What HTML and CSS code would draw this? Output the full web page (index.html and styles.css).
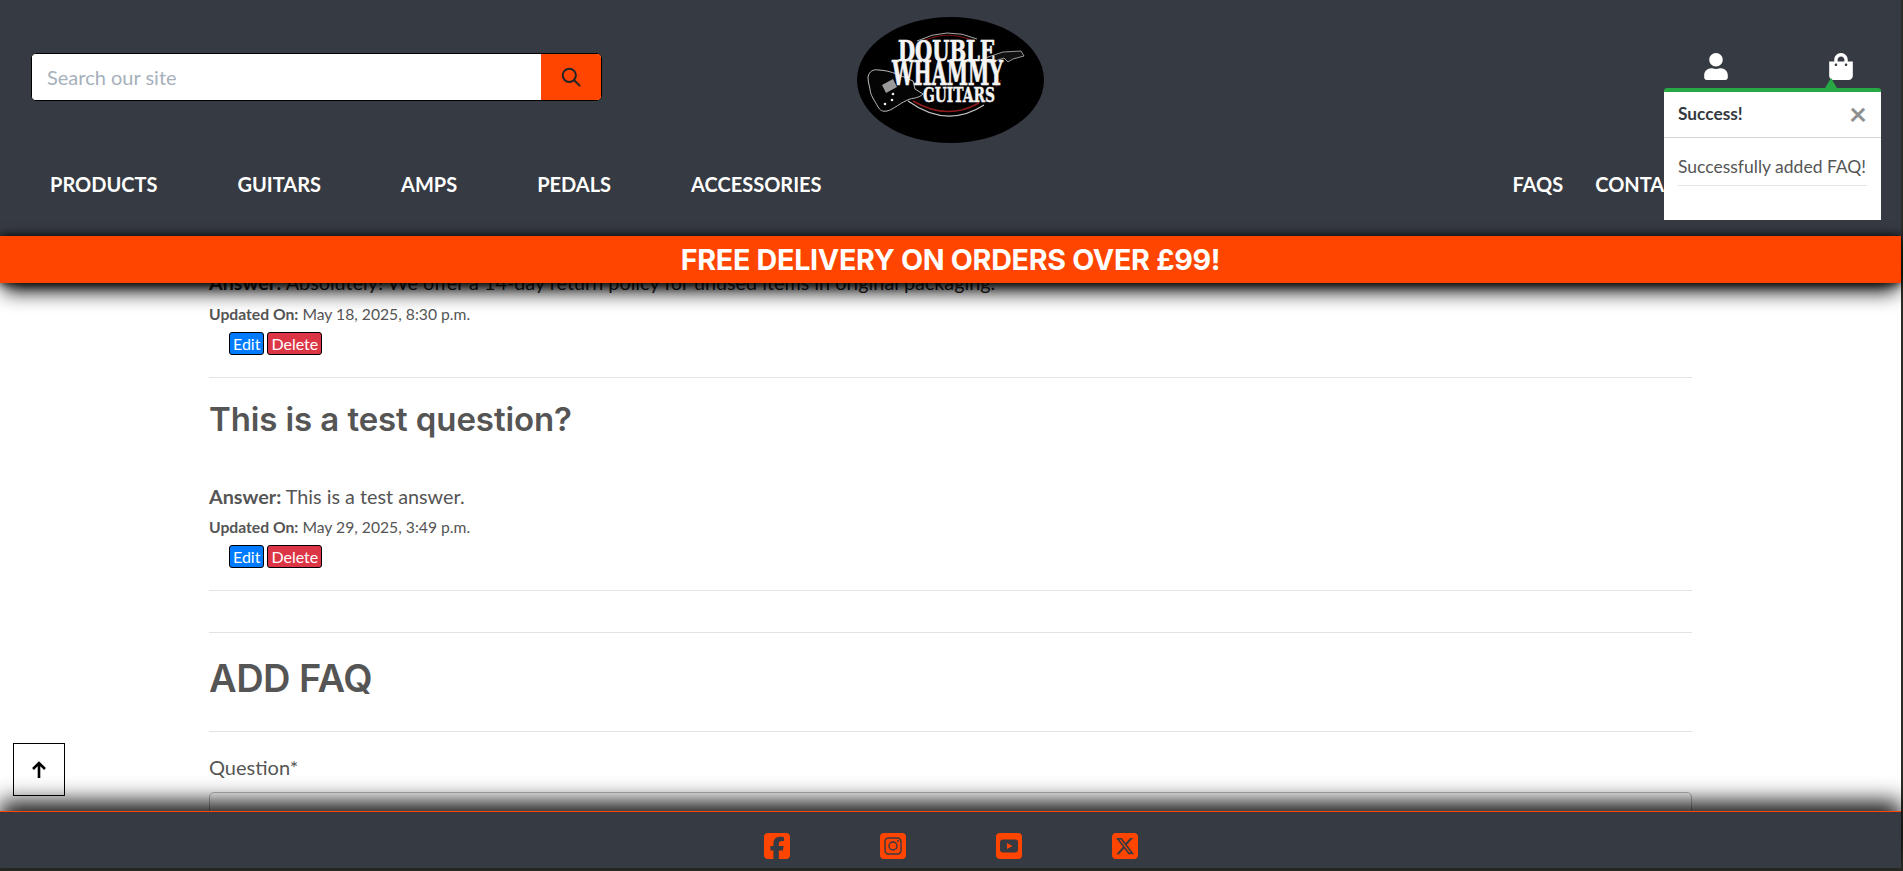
FILE: index.html
```html
<!DOCTYPE html>
<html lang="en">
<head>
<meta charset="utf-8">
<title>FAQs - Double Whammy Guitars</title>
<link rel="stylesheet" href="styles.css">
</head>
<body>
<header class="site-header">
  <div class="top-row">
    <form class="search">
      <input class="search-input" type="text" placeholder="Search our site">
      <button class="search-btn" type="button" aria-label="Search">
        <svg class="search-icon" viewBox="0 0 20 20"><circle cx="8.3" cy="8.3" r="6.6"/><path d="M13.2 13.2 L18.6 18.6"/></svg>
      </button>
    </form>
    <a class="logo" href="#">
      <svg viewBox="0 0 187 126" width="187" height="126">
        <ellipse cx="93.5" cy="63" rx="93.5" ry="63" fill="#000"/>
        <path d="M60 24 Q90 9 120 22" fill="none" stroke="#aaa" stroke-width="1"/>
        <path d="M66 24 Q90 13 114 23" fill="none" stroke="#7d1414" stroke-width="1.2"/>
        <path d="M56 84 Q90 104 122 86" fill="none" stroke="#8c1c1c" stroke-width="1.6"/>
        <path d="M51 84 Q90 112 127 88" fill="none" stroke="#c4c4c4" stroke-width="1.2"/>
        <path d="M136 66 L142 62 M139 70 L144 63" fill="none" stroke="#8c1c1c" stroke-width="1"/>
        <path d="M11 60 C12 54 17 52 21 53 C28 53 34 55 40 57 L56 64 L58 72 L66 77 C62 81 57 81 53 82 C44 85 36 93 30 94 C25 95 23 93 21 90 C18 84 13 78 13 72 C12 68 11 64 11 60Z" fill="#050505" stroke="#bdbdbd" stroke-width="1"/>
        <path d="M25 68 L36 62 L40 70 L29 76 Z" fill="#9a9a9a"/>
        <circle cx="28" cy="87" r="1.3" fill="#eee"/>
        <circle cx="35" cy="83" r="1.3" fill="#eee"/>
        <circle cx="36" cy="77" r="1.3" fill="#eee"/>
        <path d="M128 41 L146 35 L164 34 L167 39 L156 42 L151 45 L147 41 L132 46 Z" fill="#111" stroke="#bbb" stroke-width=".8"/>
        <text class="logo-text l1" x="41" y="44" textLength="97" lengthAdjust="spacingAndGlyphs">DOUBLE</text>
        <text class="logo-text l2" x="35" y="68" textLength="111" lengthAdjust="spacingAndGlyphs">WHAMMY</text>
        <text class="logo-text l3" x="66" y="85" textLength="72" lengthAdjust="spacingAndGlyphs">GUITARS</text>
      </svg>
    </a>
    <div class="account">
      <a class="account-link" href="#" aria-label="Account">
        <svg class="account-icon" viewBox="0 0 448 512"><path d="M224 256c70.7 0 128-57.3 128-128S294.7 0 224 0 96 57.3 96 128s57.3 128 128 128zm89.6 32h-16.7c-22.2 10.2-46.9 16-72.9 16s-50.6-5.8-72.9-16h-16.7C60.2 288 0 348.2 0 422.4V464c0 26.5 21.5 48 48 48h352c26.5 0 48-21.5 48-48v-41.6c0-74.2-60.2-134.4-134.4-134.4z"/></svg>
      </a>
      <a class="account-link" href="#" aria-label="Bag">
        <svg class="account-icon" viewBox="0 0 448 512"><path d="M352 160v-32C352 57.42 294.579 0 224 0 153.42 0 96 57.42 96 128v32H0v272c0 44.183 35.817 80 80 80h288c44.183 0 80-35.817 80-80V160h-96zm-192-32c0-35.29 28.71-64 64-64s64 28.71 64 64v32H160v-32zm160 120c-13.255 0-24-10.745-24-24s10.745-24 24-24 24 10.745 24 24-10.745 24-24 24zm-192 0c-13.255 0-24-10.745-24-24s10.745-24 24-24 24 10.745 24 24-10.745 24-24 24z"/></svg>
      </a>
    </div>
  </div>
  <nav class="nav-row">
    <ul class="nav-list">
      <li><a href="#">PRODUCTS</a></li>
      <li><a href="#">GUITARS</a></li>
      <li><a href="#">AMPS</a></li>
      <li><a href="#">PEDALS</a></li>
      <li><a href="#">ACCESSORIES</a></li>
    </ul>
    <ul class="nav-list nav-right">
      <li><a href="#">FAQS</a></li>
      <li><a href="#">CONTACT</a></li>
    </ul>
  </nav>
  <div class="banner">FREE DELIVERY ON ORDERS OVER £99!</div>
</header>

<aside class="toast">
  <span class="toast-arrow"></span>
  <div class="toast-head">
    <strong class="toast-title">Success!</strong>
    <span class="toast-close">×</span>
  </div>
  <div class="toast-body">
    <p class="toast-msg">Successfully added FAQ!</p>
  </div>
</aside>

<main class="page">
  <div class="container">
    <section class="faq faq-first">
      <p class="answer"><b>Answer:</b> Absolutely! We offer a 14-day return policy for unused items in original packaging.</p>
      <p class="updated"><b>Updated On:</b> May 18, 2025, 8:30 p.m.</p>
      <div class="actions"><a class="btn btn-edit" href="#">Edit</a><a class="btn btn-delete" href="#">Delete</a></div>
    </section>
    <section class="faq">
      <h3 class="question">This is a test question?</h3>
      <p class="answer answer-grey"><b>Answer:</b> This is a test answer.</p>
      <p class="updated"><b>Updated On:</b> May 29, 2025, 3:49 p.m.</p>
      <div class="actions"><a class="btn btn-edit" href="#">Edit</a><a class="btn btn-delete" href="#">Delete</a></div>
    </section>
    <section class="add">
      <h2 class="add-title">ADD FAQ</h2>
      <form class="add-form">
        <label class="field-label" for="q">Question*</label>
        <input class="field-input" id="q" type="text">
      </form>
    </section>
  </div>
</main>

<a class="to-top" href="#" aria-label="Back to top">
  <svg viewBox="0 0 16 18" width="16" height="18"><path d="M8 17 V2 M2 8 L8 2 L14 8"/></svg>
</a>

<footer class="site-footer">
  <a class="social" href="#" aria-label="Facebook">
    <svg viewBox="0 0 448 448"><path transform="translate(0 -32)" d="M64 32C28.7 32 0 60.7 0 96V416c0 35.3 28.7 64 64 64h98.2V334.2H109.4V256h52.8V222.3c0-87.1 39.4-127.5 125-127.5c16.2 0 44.2 3.2 55.7 6.4V172c-6-.6-16.5-1-29.6-1c-42 0-58.2 15.9-58.2 57.2V256h83.6l-14.4 78.2H255V480H384c35.3 0 64-28.7 64-64V96c0-35.3-28.7-64-64-64H64z"/></svg>
  </a>
  <a class="social" href="#" aria-label="Instagram">
    <svg viewBox="0 0 26 26"><rect width="26" height="26" rx="4"/><rect class="cut" x="5" y="5" width="16" height="16" rx="3.5"/><circle class="cut" cx="13" cy="13" r="4"/><circle class="dot" cx="18" cy="8" r="1"/></svg>
  </a>
  <a class="social" href="#" aria-label="YouTube">
    <svg viewBox="0 0 26 26"><rect width="26" height="26" rx="4"/><rect class="fill-dark" x="4" y="6.5" width="18" height="13" rx="3"/><path d="M11 10 L16.5 13 L11 16 Z"/></svg>
  </a>
  <a class="social" href="#" aria-label="X">
    <svg viewBox="0 0 448 448"><path transform="translate(0 -32)" d="M64 32C28.7 32 0 60.7 0 96V416c0 35.3 28.7 64 64 64H384c35.3 0 64-28.7 64-64V96c0-35.3-28.7-64-64-64H64zm297.1 84L257.3 234.6 379.4 396H283.8L209 298.1 123.3 396H75.8l111-126.9L69.7 116h98l67.7 89.5L313.6 116h47.5zM323.3 367.6L153.4 142.9H125.1L296.9 367.6h26.3z"/></svg>
  </a>
</footer>
</body>
</html>
```

FILE: styles.css
```css
* { box-sizing: border-box; }
html, body { margin: 0; height: 100%; overflow: hidden; }
body {
  background: #2a2c26;
  font-family: "Lato", "Liberation Sans", sans-serif;
  color: #555;
  font-size: 20px;
}
a { text-decoration: none; color: inherit; }
ul { list-style: none; margin: 0; padding: 0; }
p { margin: 0; }

/* Header */
.site-header {
  position: fixed;
  top: 0; left: 0; right: 2px;
  z-index: 10;
  background: #363a42;
}
.top-row {
  height: 154px;
  padding: 0 31px;
  display: grid;
  grid-template-columns: 1fr 187px 1fr;
  align-items: center;
}
.search {
  display: flex;
  width: 571px;
  height: 48px;
  border: 1px solid #000;
  border-radius: 5px;
  overflow: hidden;
  background: #fff;
}
.search-input {
  flex: 1;
  border: 0;
  outline: 0;
  padding: 0 15px;
  font: 20px "Lato", sans-serif;
  color: #333;
  min-width: 0;
}
.search-input::placeholder { color: #a6b0bb; opacity: 1; }
.search-btn {
  width: 60px;
  border: 0;
  padding: 0;
  background: #ff4500;
  display: flex;
  align-items: center;
  justify-content: center;
}
.search-icon { width: 20px; height: 20px; fill: none; stroke: #212529; stroke-width: 2; stroke-linecap: round; }
.logo { display: block; height: 126px; margin-top: 6px; }
.logo-text {
  font-family: "DejaVu Serif Condensed", "DejaVu Serif", serif;
  font-weight: 700;
  fill: #f4f4f4;
  stroke: #f4f4f4;
  stroke-width: .7px;
}
.l1 { font-size: 27px; }
.l2 { font-size: 33px; }
.l3 { font-size: 20px; stroke-width: .4px; }
.account {
  display: flex;
  justify-content: flex-end;
  gap: 101px;
  padding-right: 17px;
  margin-top: -22px;
}
.account-link { display: block; line-height: 0; }
.account-icon { width: 24px; height: 27px; fill: #fff; }

.nav-row {
  height: 82px;
  padding: 0 0 22px 10px;
  display: flex;
  align-items: center;
  justify-content: space-between;
  font-size: 20px;
  font-weight: 700;
  color: #fff;
}
.nav-list { display: flex; gap: 80px; padding-left: 40px; }
.nav-right { gap: 32px; padding-left: 0; padding-right: 212px; }

.banner {
  height: 47px;
  background: #ff4500;
  color: #fff;
  font-family: "Inter", "Liberation Sans", sans-serif;
  font-weight: 700;
  font-size: 28.7px;
  letter-spacing: -.3px;
  line-height: 47px;
  text-align: center;
  box-shadow: 0 12px 20px -4px #000, 0 0 10px #000;
}

/* Toast */
.toast {
  position: fixed;
  z-index: 20;
  top: 88px;
  left: 1664px;
  width: 217px;
  height: 132px;
  background: #fff;
  border-top: 4px solid #28a745;
  border-radius: 3px 3px 0 0;
}
.toast-arrow {
  position: absolute;
  top: -14px;
  left: 161px;
  width: 0; height: 0;
  border-left: 6px solid transparent;
  border-right: 6px solid transparent;
  border-bottom: 10px solid #28a745;
}
.toast-head {
  height: 46px;
  padding: 0 14px 2px;
  border-bottom: 1px solid #d5d5d5;
  display: flex;
  align-items: center;
  justify-content: space-between;
}
.toast-title { font-size: 17.3px; color: #343a40; font-weight: 700; }
.toast-close { font-size: 31px; color: #8f8f8f; font-weight: 700; line-height: 1; }
.toast-body { padding: 17px 14px 0; }
.toast-msg {
  font-size: 17.5px;
  color: #555;
  line-height: 24px;
  padding-bottom: 6px;
  border-bottom: 1px solid #e5e5e5;
  white-space: nowrap;
}

/* Content */
.page {
  height: calc(100vh - 3px);
  margin-right: 2px;
  background: #fff;
  overflow: hidden;
  padding-top: 270px;
}
.container { width: 1483px; margin-left: 209px; }
.faq { border-bottom: 1px solid #e3e3e3; padding-bottom: 22px; }
.faq-first { padding-bottom: 22px; }
.faq-first .updated { margin-top: 10px; }
.question {
  margin: 0;
  padding-top: 21px;
  font-family: "Inter", sans-serif;
  font-weight: 600;
  font-size: 33px;
  letter-spacing: -.1px;
  line-height: 40px;
  color: #555;
  height: 106px;
}
.answer { font-size: 19.8px; line-height: 24px; color: #222; }
.answer-grey { color: #555; }
.answer b { color: inherit; }
.updated { font-size: 15.7px; line-height: 20px; margin-top: 9px; }
.actions { display: flex; gap: 3px; margin: 8px 0 0 20px; }
.btn {
  display: block;
  font-size: 16px;
  line-height: 21px;
  color: #fff;
  border: 1px solid #000;
  border-radius: 3px;
  padding: 0 3px;
}
.btn-edit { background: #007bff; }
.btn-delete { background: #dc3545; }

.add { margin-top: 41px; border-top: 1px solid #e3e3e3; }
.add-title {
  margin: 0;
  height: 99px;
  border-bottom: 1px solid #e3e3e3;
  font-family: "Inter", sans-serif;
  font-weight: 600;
  font-size: 38px;
  letter-spacing: -.5px;
  line-height: 90px;
  color: #555;
}
.add-form { padding-top: 22px; }
.field-label { display: block; font-size: 20px; line-height: 26px; }
.field-input {
  display: block;
  width: 100%;
  height: 50px;
  margin-top: 12px;
  border: 1px solid #bbb;
  border-radius: 5px;
  background: #fff;
}

/* Back to top */
.to-top {
  position: fixed;
  z-index: 5;
  left: 13px;
  top: 743px;
  width: 52px;
  height: 53px;
  border: 1px solid #000;
  background: #fff;
  display: flex;
  align-items: center;
  justify-content: center;
}
.to-top svg { fill: none; stroke: #000; stroke-width: 2.6; }

/* Footer */
.site-footer {
  position: fixed;
  z-index: 8;
  left: 0; right: 2px; bottom: 3px;
  height: 57px;
  background: #363a42;
  border-top: 1px solid #ff4500;
  box-shadow: 0 -10px 22px rgba(0,0,0,.9);
  display: flex;
  justify-content: center;
  align-items: center;
  gap: 90px;
  padding-top: 11px;
}
.social { display: block; width: 26px; height: 26px; line-height: 0; }
.social svg { width: 26px; height: 26px; fill: #ff4500; }
.social .cut { fill: none; stroke: #363a42; stroke-width: 1.4; }
.social .dot { fill: #363a42; }
.social .fill-dark { fill: #363a42; }
```
